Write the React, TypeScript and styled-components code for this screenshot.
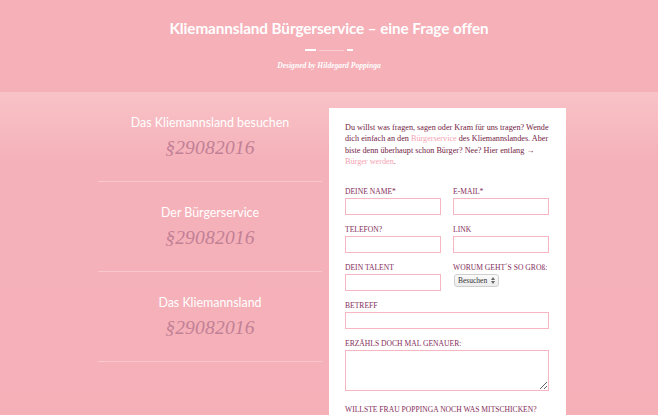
import React from "react";
import styled, { createGlobalStyle } from "styled-components";

const Global = createGlobalStyle`
  html, body { margin: 0; padding: 0; overflow: hidden; }
  body { background: #f5b0b8; font-family: "Liberation Serif", serif; }
  * { box-sizing: border-box; }
`;

const Page = styled.div`
  min-height: 415px;
  background: linear-gradient(to bottom, #f5b0b8 0, #f5b0b8 92px, #f8c3c8 92px, #f5b1b9 160px, #f5b0b8 100%);
`;

const Header = styled.header`
  height: 92px;
  display: flex;
  flex-direction: column;
  align-items: center;
  padding-top: 17px;
`;

const Title = styled.h1`
  margin: 0;
  font-family: Lato, sans-serif;
  font-weight: 700;
  font-size: 15.3px;
  line-height: 22px;
  color: #ffffff;
  letter-spacing: -0.1px;
`;

const Rule = styled.div`
  margin-top: 10px;
  display: flex;
  align-items: center;
  gap: 3px;
`;

const Dash = styled.span<{ $w: number; $faint?: boolean }>`
  display: block;
  width: ${(p) => p.$w}px;
  height: ${(p) => (p.$faint ? 1 : 2)}px;
  background: ${(p) => (p.$faint ? "rgba(255,255,255,0.4)" : "#ffffff")};
`;

const Byline = styled.p`
  margin: 10px 0 0;
  font-family: "Liberation Serif", serif;
  font-style: italic;
  font-weight: 700;
  font-size: 7.6px;
  line-height: 10px;
  color: #ffffff;
`;

const Main = styled.main`
  width: 474px;
  margin: 0 auto;
  padding-left: 6px;
  display: flex;
  align-items: flex-start;
  gap: 7px;
`;

const Side = styled.aside`
  width: 224px;
  display: flex;
  flex-direction: column;
`;

const SideItem = styled.div`
  height: 90px;
  padding-top: 22px;
  border-bottom: 1px solid rgba(255, 255, 255, 0.3);
  display: flex;
  flex-direction: column;
  align-items: center;
`;

const SideTitle = styled.h2`
  margin: 0;
  font-family: Lato, sans-serif;
  font-weight: 400;
  font-size: 12.4px;
  line-height: 18px;
  color: #ffffff;
`;

const SideNum = styled.div`
  margin-top: 3px;
  font-family: "Liberation Serif", serif;
  font-style: italic;
  font-size: 19.5px;
  line-height: 26px;
  color: #c28096;
  letter-spacing: 0.2px;
`;

const Card = styled.section`
  width: 237px;
  margin-top: 16px;
  background: #ffffff;
  padding: 14px 17px 40px 16px;
  min-height: 340px;
`;

const Intro = styled.p`
  margin: 0 0 19px;
  font-size: 8.2px;
  line-height: 11.4px;
  color: #742245;
`;

const Link = styled.a`
  color: #f5a3b1;
  text-decoration: none;
`;

const Grid = styled.div`
  display: grid;
  grid-template-columns: 96px 96px;
  column-gap: 12px;
  row-gap: 10px;
`;

const Field = styled.label<{ $full?: boolean }>`
  display: flex;
  flex-direction: column;
  align-items: flex-start;
  gap: 2px;
  grid-column: ${(p) => (p.$full ? "1 / -1" : "auto")};
`;

const Label = styled.span`
  font-size: 7.6px;
  line-height: 9px;
  color: #842e5a;
  white-space: nowrap;
`;

const Input = styled.input`
  width: 100%;
  height: 17px;
  border: 1.5px solid #f7b6c1;
  background: #fff;
  padding: 0 3px;
  outline: none;
  display: block;
`;

const Area = styled.textarea`
  width: 100%;
  height: 41px;
  border: 1.5px solid #f7b6c1;
  background: #fff;
  padding: 3px;
  outline: none;
  display: block;
`;

const SelectWrap = styled.span`
  position: relative;
  display: flex;
  width: 45px;
  height: 13px;
  margin-left: 1px;
`;

const Select = styled.select`
  appearance: none;
  -webkit-appearance: none;
  display: block;
  width: 45px;
  height: 13px;
  padding: 0 10px 0 3px;
  font-family: "Liberation Serif", serif;
  font-size: 7.5px;
  color: #333;
  background: linear-gradient(#fbfbfb, #ececec);
  border: 1px solid #cfcfcf;
  border-radius: 3px;
  outline: none;
`;

const Arrows = styled.svg`
  position: absolute;
  right: 4px;
  top: 3px;
  pointer-events: none;
`;

const BottomLabel = styled.div`
  margin-top: 14px;
  font-size: 7.6px;
  line-height: 10px;
  color: #842e5a;
  white-space: nowrap;
`;

const items = ["Das Kliemannsland besuchen", "Der Bürgerservice", "Das Kliemannsland"];

export default function App() {
  return (
    <Page>
      <Global />
      <Header>
        <Title>Kliemannsland Bürgerservice – eine Frage offen</Title>
        <Rule>
          <Dash $w={11} />
          <Dash $w={25} $faint />
          <Dash $w={6} />
        </Rule>
        <Byline>Designed by Hildegard Poppinga</Byline>
      </Header>
      <Main>
        <Side>
          {items.map((t) => (
            <SideItem key={t}>
              <SideTitle>{t}</SideTitle>
              <SideNum>§29082016</SideNum>
            </SideItem>
          ))}
        </Side>
        <Card>
          <Intro>
            Du willst was fragen, sagen oder Kram für uns tragen? Wende dich einfach an den{" "}
            <Link href="#">Bürgerservice</Link> des Kliemannslandes. Aber biste denn überhaupt schon
            Bürger? Nee? Hier entlang → <Link href="#">Bürger werden</Link>.
          </Intro>
          <Grid>
            <Field>
              <Label>DEINE NAME*</Label>
              <Input />
            </Field>
            <Field>
              <Label>E-MAIL*</Label>
              <Input />
            </Field>
            <Field>
              <Label>TELEFON?</Label>
              <Input />
            </Field>
            <Field>
              <Label>LINK</Label>
              <Input />
            </Field>
            <Field>
              <Label>DEIN TALENT</Label>
              <Input />
            </Field>
            <Field>
              <Label>WORUM GEHT´S SO GROß:</Label>
              <SelectWrap>
                <Select defaultValue="Besuchen">
                  <option>Besuchen</option>
                </Select>
                <Arrows width="4" height="7" viewBox="0 0 4 7">
                  <path d="M0 3 L2 0 L4 3 Z M0 4 L2 7 L4 4 Z" fill="#666" />
                </Arrows>
              </SelectWrap>
            </Field>
            <Field $full>
              <Label>BETREFF</Label>
              <Input />
            </Field>
            <Field $full>
              <Label>ERZÄHLS DOCH MAL GENAUER:</Label>
              <Area />
            </Field>
          </Grid>
          <BottomLabel>WILLSTE FRAU POPPINGA NOCH WAS MITSCHICKEN?</BottomLabel>
        </Card>
      </Main>
    </Page>
  );
}
